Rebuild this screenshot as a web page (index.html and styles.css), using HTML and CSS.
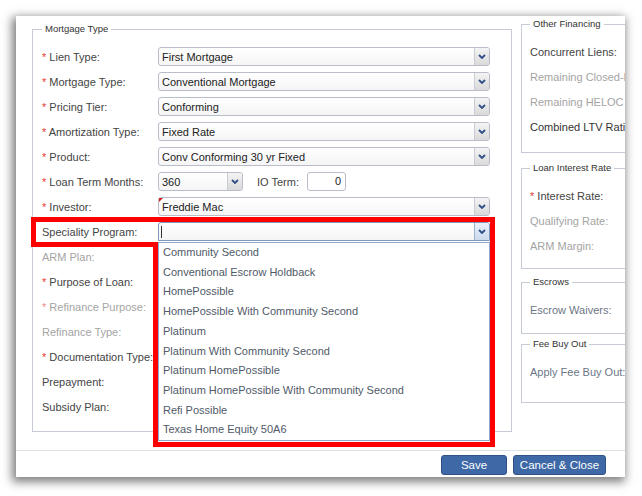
FILE: index.html
```html
<!DOCTYPE html>
<html>
<head>
<meta charset="utf-8">
<link rel="stylesheet" href="styles.css">
</head>
<body>
<div class="window">
  <div class="content">
    <fieldset class="main">
      <legend>Mortgage Type</legend>
      <div class="row"><span class="lbl"><span class="req">*</span> Lien Type:</span><div class="sel"><span class="val">First Mortgage</span><span class="arrow"><svg width="8" height="5" viewBox="0 0 8 5"><path d="M1 1 L4 4 L7 1" fill="none" stroke="#2f4d86" stroke-width="1.8"/></svg></span></div></div>
      <div class="row"><span class="lbl"><span class="req">*</span> Mortgage Type:</span><div class="sel"><span class="val">Conventional Mortgage</span><span class="arrow"><svg width="8" height="5" viewBox="0 0 8 5"><path d="M1 1 L4 4 L7 1" fill="none" stroke="#2f4d86" stroke-width="1.8"/></svg></span></div></div>
      <div class="row"><span class="lbl"><span class="req">*</span> Pricing Tier:</span><div class="sel"><span class="val">Conforming</span><span class="arrow"><svg width="8" height="5" viewBox="0 0 8 5"><path d="M1 1 L4 4 L7 1" fill="none" stroke="#2f4d86" stroke-width="1.8"/></svg></span></div></div>
      <div class="row"><span class="lbl"><span class="req">*</span> Amortization Type:</span><div class="sel"><span class="val">Fixed Rate</span><span class="arrow"><svg width="8" height="5" viewBox="0 0 8 5"><path d="M1 1 L4 4 L7 1" fill="none" stroke="#2f4d86" stroke-width="1.8"/></svg></span></div></div>
      <div class="row"><span class="lbl"><span class="req">*</span> Product:</span><div class="sel"><span class="val">Conv Conforming 30 yr Fixed</span><span class="arrow"><svg width="8" height="5" viewBox="0 0 8 5"><path d="M1 1 L4 4 L7 1" fill="none" stroke="#2f4d86" stroke-width="1.8"/></svg></span></div></div>
      <div class="row"><span class="lbl"><span class="req">*</span> Loan Term Months:</span><div class="sel short"><span class="val">360</span><span class="arrow"><svg width="8" height="5" viewBox="0 0 8 5"><path d="M1 1 L4 4 L7 1" fill="none" stroke="#2f4d86" stroke-width="1.8"/></svg></span></div><span class="io-lbl">IO Term:</span><div class="inp">0</div></div>
      <div class="row"><span class="lbl"><span class="req">*</span> Investor:</span><div class="sel dirty"><span class="val">Freddie Mac</span><span class="arrow"><svg width="8" height="5" viewBox="0 0 8 5"><path d="M1 1 L4 4 L7 1" fill="none" stroke="#2f4d86" stroke-width="1.8"/></svg></span></div></div>
      <div class="row"><span class="lbl">Speciality Program:</span><div class="sel focus"><span class="val"><span class="caret"></span></span><span class="arrow"><svg width="8" height="5" viewBox="0 0 8 5"><path d="M1 1 L4 4 L7 1" fill="none" stroke="#2f4d86" stroke-width="1.8"/></svg></span>
        <ul class="list">
          <li>Community Second</li>
          <li>Conventional Escrow Holdback</li>
          <li>HomePossible</li>
          <li>HomePossible With Community Second</li>
          <li>Platinum</li>
          <li>Platinum With Community Second</li>
          <li>Platinum HomePossible</li>
          <li>Platinum HomePossible With Community Second</li>
          <li>Refi Possible</li>
          <li>Texas Home Equity 50A6</li>
        </ul>
      </div></div>
      <div class="row"><span class="lbl dis">ARM Plan:</span></div>
      <div class="row"><span class="lbl"><span class="req">*</span> Purpose of Loan:</span></div>
      <div class="row"><span class="lbl dis"><span class="req dimreq">*</span> Refinance Purpose:</span></div>
      <div class="row"><span class="lbl dis">Refinance Type:</span></div>
      <div class="row"><span class="lbl"><span class="req">*</span> Documentation Type:</span></div>
      <div class="row"><span class="lbl">Prepayment:</span></div>
      <div class="row"><span class="lbl">Subsidy Plan:</span></div>
    </fieldset>
    <div class="side">
      <fieldset class="sf of">
        <legend>Other Financing</legend>
        <div class="row"><span class="slbl">Concurrent Liens:</span></div>
        <div class="row"><span class="slbl dis">Remaining Closed-End</span></div>
        <div class="row"><span class="slbl dis">Remaining HELOC</span></div>
        <div class="row"><span class="slbl dark">Combined LTV Ratio:</span></div>
      </fieldset>
      <fieldset class="sf lir">
        <legend>Loan Interest Rate</legend>
        <div class="row"><span class="slbl"><span class="req">*</span> Interest Rate:</span></div>
        <div class="row"><span class="slbl dis">Qualifying Rate:</span></div>
        <div class="row"><span class="slbl dis">ARM Margin:</span></div>
      </fieldset>
      <fieldset class="sf esc">
        <legend>Escrows</legend>
        <div class="row"><span class="slbl soft">Escrow Waivers:</span></div>
      </fieldset>
      <fieldset class="sf fee">
        <legend>Fee Buy Out</legend>
        <div class="row"><span class="slbl soft">Apply Fee Buy Out:</span></div>
      </fieldset>
    </div>
  </div>
  <div class="footer">
    <button class="btn save">Save</button>
    <button class="btn cancel">Cancel &amp; Close</button>
  </div>
</div>
<svg class="annot" width="642" height="496" viewBox="0 0 642 496">
  <path d="M33.5 219.5 H492.5 V444.5 H155.5 V244.5 H33.5 Z" fill="none" stroke="#ff0000" stroke-width="5" stroke-linejoin="miter"/>
</svg>
</body>
</html>
```

FILE: styles.css
```css
html, body {
  margin: 0;
}
body {
  position: relative;
  width: 642px;
  height: 496px;
  overflow: hidden;
  background: #ffffff;
  padding: 16px 0 0 16px;
  box-sizing: border-box;
  font-family: "Liberation Sans", Arial, sans-serif;
  font-size: 11px;
  color: #444;
}
.window {
  width: 609px;
  height: 461px;
  background: #fff;
  box-shadow: -2px 3px 9px 2px rgba(0, 0, 0, 0.5);
  display: flex;
  flex-direction: column;
  overflow: hidden;
}
.content {
  height: 434px;
  flex: none;
  display: flex;
  align-items: flex-start;
  padding-left: 16px;
}
fieldset {
  margin: 0;
  border: 1px solid #c6cbd6;
  padding: 9px 0 0 9px;
  box-sizing: border-box;
  min-width: 0;
}
legend {
  padding: 0 3px;
  font-size: 9.5px;
  line-height: 12px;
  color: #333;
}
.main {
  margin-top: 7px;
  width: 480px;
  flex: none;
  padding-bottom: 12px;
}
.row {
  display: flex;
  align-items: center;
  height: 25px;
  white-space: nowrap;
}
.lbl {
  width: 116px;
  flex: none;
  color: #444;
}
.slbl {
  color: #444;
}
.slbl.dark {
  color: #333;
}
.slbl.soft {
  color: #6b7686;
}
.req {
  color: #e53935;
}
.lbl.dis,
.slbl.dis {
  color: #a4a4a4;
}
.dimreq {
  color: #ec8a88;
}
.sel {
  position: relative;
  width: 332px;
  height: 19px;
  flex: none;
  box-sizing: border-box;
  border: 1px solid #b9bdc9;
  border-radius: 3px;
  background: linear-gradient(#ffffff, #f5f5f5);
  display: flex;
  align-items: center;
}
.val {
  flex: 1;
  padding-left: 3px;
  color: #222;
  overflow: hidden;
  display: flex;
  align-items: center;
}
.arrow {
  width: 15px;
  height: 100%;
  flex: none;
  box-sizing: border-box;
  border-left: 1px solid #c9ccd4;
  background: linear-gradient(#f4f4f4, #d9d9d9);
  border-radius: 0 2px 2px 0;
  display: flex;
  align-items: center;
  justify-content: center;
}
.short {
  width: 85px;
}
.io-lbl {
  margin-left: 14px;
  width: 50px;
  flex: none;
  color: #444;
}
.inp {
  width: 39px;
  height: 19px;
  flex: none;
  box-sizing: border-box;
  border: 1px solid #b9bdc9;
  border-radius: 3px;
  background: #fff;
  text-align: right;
  padding-right: 4px;
  line-height: 17px;
  color: #222;
}
.dirty::before {
  content: "";
  position: absolute;
  left: 0;
  top: 0;
  border-style: solid;
  border-width: 4px 4px 0 0;
  border-color: #d42020 transparent transparent transparent;
}
.focus {
  border-color: #7f98ba;
  border-radius: 3px 3px 0 0;
}
.focus .arrow {
  border-left-color: #9bb0cc;
  background: linear-gradient(#eaf1fa, #cbdaee);
}
.caret {
  display: block;
  width: 1px;
  height: 12px;
  background: #333;
  margin-left: -1px;
}
.list {
  position: absolute;
  left: -1px;
  top: 19px;
  width: 332px;
  height: 199px;
  box-sizing: border-box;
  margin: 0;
  padding: 0;
  list-style: none;
  background: #fff;
  border: 1px solid #8eaad0;
}
.list li {
  line-height: 19.7px;
  padding-left: 4px;
  color: #505a68;
}
.side {
  margin-left: 9px;
  margin-top: 2px;
  width: 130px;
  flex: none;
}
.sf {
  width: 130px;
  padding: 9px 0 0 8px;
}
.of {
  padding-bottom: 13px;
}
.lir {
  margin-top: 9px;
  padding-bottom: 10px;
}
.esc {
  margin-top: 7px;
  padding-bottom: 11px;
}
.fee {
  margin-top: 4px;
  padding-bottom: 18px;
}
.footer {
  flex: 1;
  border-top: 1px solid #dde2e9;
  display: flex;
  justify-content: flex-end;
  align-items: flex-start;
  padding: 4px 19px 0 0;
  gap: 6px;
}
.btn {
  height: 20px;
  margin: 0;
  padding: 0;
  border: 1px solid #2e5287;
  border-radius: 3px;
  background: #3e69a6;
  color: #fff;
  font-family: "Liberation Sans", Arial, sans-serif;
  font-size: 11.5px;
  line-height: 18px;
}
.save {
  width: 66px;
}
.cancel {
  width: 93px;
}
.annot {
  position: absolute;
  left: 0;
  top: 0;
  pointer-events: none;
}
```
